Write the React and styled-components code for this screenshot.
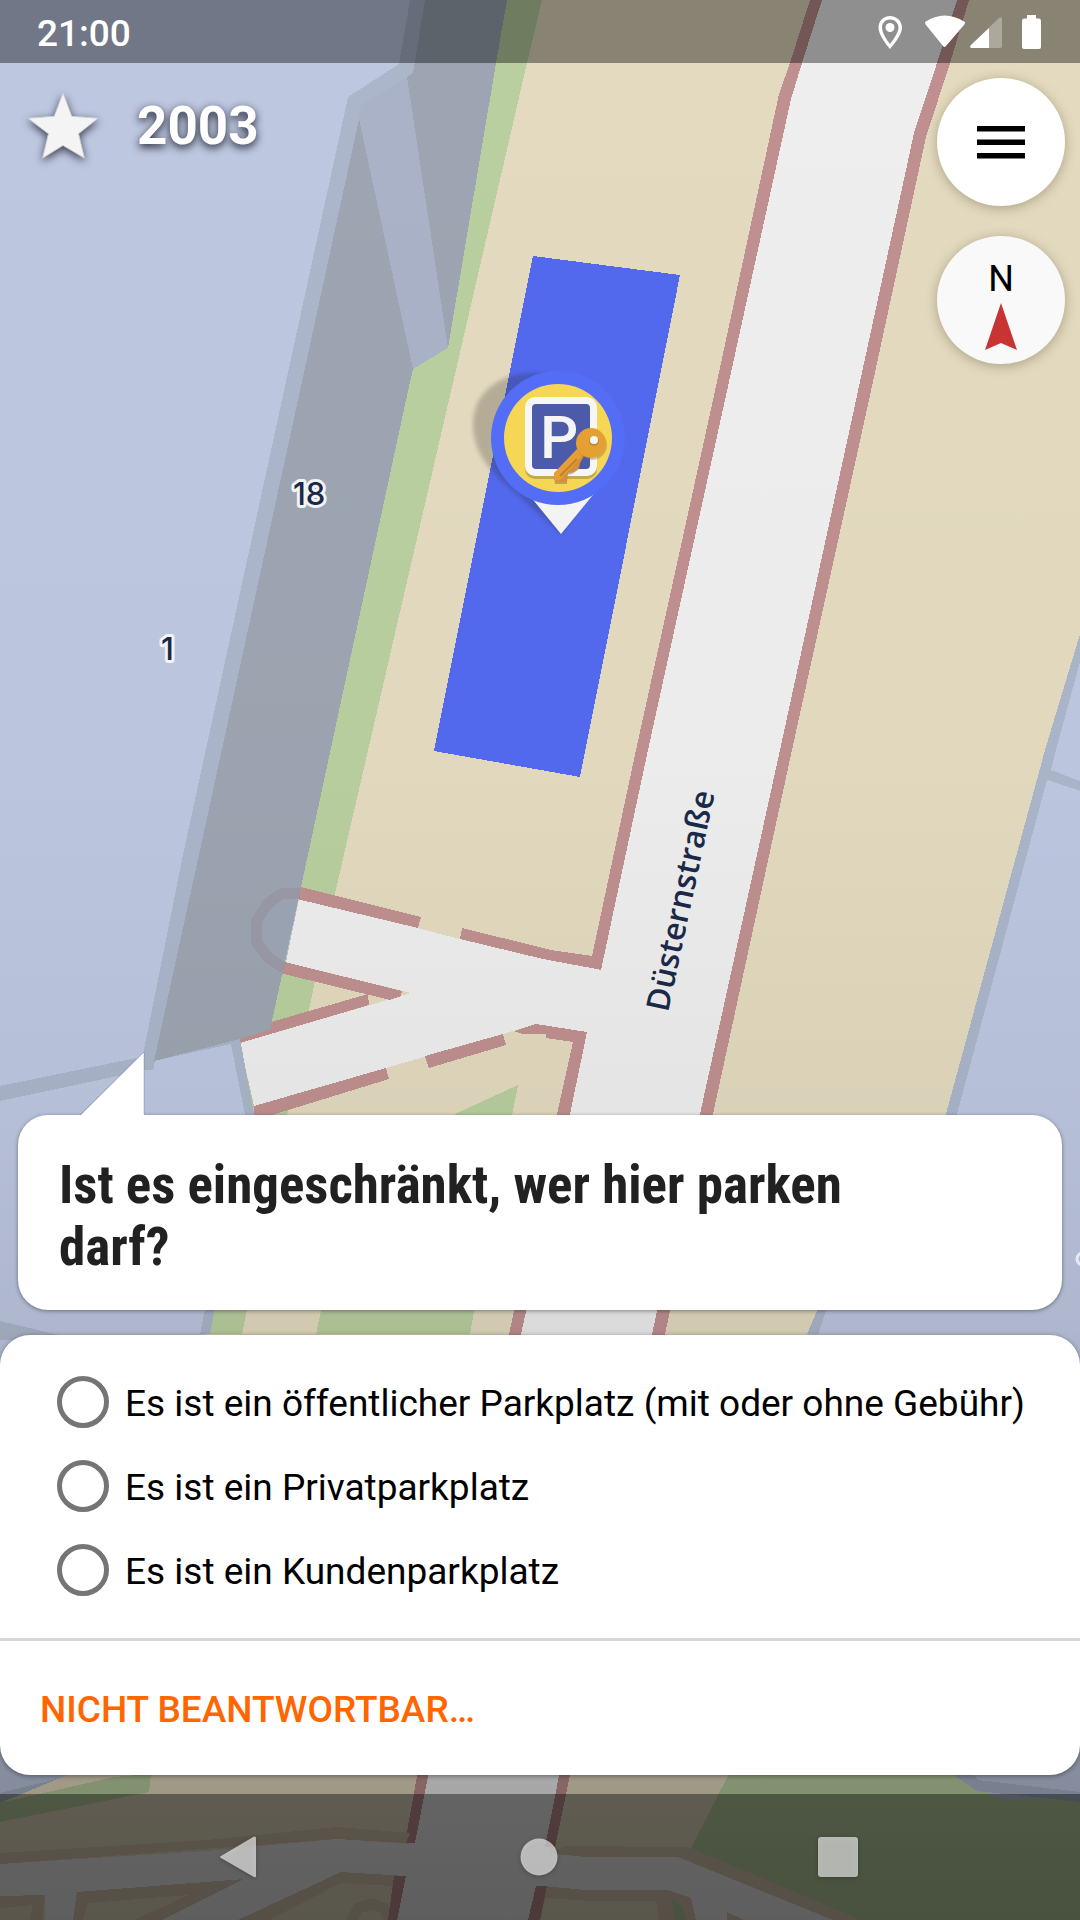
import React, { useState } from "react";
import styled, { createGlobalStyle } from "styled-components";

const GlobalStyle = createGlobalStyle`
  * { box-sizing: border-box; }
  html, body { margin: 0; padding: 0; }
  body { font-family: Roboto, "Liberation Sans", sans-serif; color: #000; }
`;

const Screen = styled.main`
  position: relative;
  display: flex;
  flex-direction: column;
  min-height: 100vh;
  overflow: hidden;
  background: #e3dabf;
`;

const MapCanvas = styled.svg`
  position: absolute;
  inset: 0;
  width: 100%;
  height: 100%;
`;

const MapLabel = styled.text`
  font-family: ${(p) => (p.$street ? '"Open Sans"' : "Inter")}, "Noto Sans", sans-serif;
  font-size: ${(p) => (p.$street ? 32 : 31)}px;
  font-weight: ${(p) => (p.$street ? 600 : 500)};
  fill: #1a2947;
  stroke: ${(p) => (p.$street ? "#ebebeb" : "#f2f3f5")};
  stroke-width: ${(p) => (p.$street ? 2 : 6)}px;
  stroke-linejoin: round;
  paint-order: stroke;
`;

const SignLetter = styled.text`
  font-family: Roboto, sans-serif;
  font-size: 60px;
  font-weight: 500;
  fill: #f5f5f5;
`;

const StatusBar = styled.header`
  position: relative;
  display: flex;
  align-items: center;
  justify-content: space-between;
  height: 63px;
  padding: 0 37px;
  background: rgba(0, 0, 0, 0.4);
  color: #fff;
`;

const Clock = styled.time`
  padding-top: 4px;
  font-size: 37px;
  font-weight: 500;
  line-height: 42px;
`;

const StatusIcons = styled.svg`
  width: 168px;
  height: 40px;
`;

const MapControls = styled.div`
  position: relative;
  display: flex;
  align-items: flex-start;
  justify-content: space-between;
  padding: 15px 15px 0 28px;
`;

const Score = styled.div`
  display: flex;
  align-items: center;
  gap: 39px;
  height: 96px;
`;

const StarIcon = styled.svg`
  width: 70px;
  height: 70px;
  overflow: visible;
  filter: drop-shadow(0 3px 4px rgba(20, 22, 35, 0.75));
`;

const ScoreValue = styled.span`
  font-size: 53px;
  font-weight: 700;
  line-height: 62px;
  color: #fff;
  text-shadow: 0 3px 9px rgba(20, 22, 35, 0.95);
`;

const ButtonColumn = styled.div`
  display: flex;
  flex-direction: column;
  gap: 30px;
`;

const RoundButton = styled.button`
  display: flex;
  flex-direction: column;
  align-items: center;
  justify-content: center;
  width: 128px;
  height: 128px;
  padding: ${(p) => (p.$compass ? "8px 0 0" : 0)};
  border: 0;
  border-radius: 50%;
  background: ${(p) => (p.$compass ? "#f9f9f9" : "#ffffff")};
  color: #000;
  font-family: inherit;
  font-size: 36px;
  line-height: 42px;
  box-shadow: 0 2px 12px rgba(70, 60, 30, 0.35);
`;

const MenuIcon = styled.svg`
  width: 48px;
  height: 34px;
`;

const NeedleIcon = styled.svg`
  width: 34px;
  height: 48px;
  margin-top: 3px;
`;

const Question = styled.section`
  position: relative;
  margin: auto 18px 25px;
  padding: 39px 41px 32px;
  border-radius: 30px;
  background: #fff;
  box-shadow: 0 1px 4px rgba(0, 0, 0, 0.4);
`;

const SpeechTail = styled.svg`
  position: absolute;
  left: 62px;
  bottom: 100%;
  width: 64px;
  height: 63px;
  overflow: visible;
`;

const QuestionTitle = styled.h1`
  max-width: 820px;
  margin: 0;
  color: #212121;
  font-family: "Roboto Condensed", "Liberation Sans Narrow", Roboto, sans-serif;
  font-size: 53px;
  font-weight: 700;
  line-height: 62px;
`;

const AnswerSheet = styled.form`
  position: relative;
  margin-bottom: 19px;
  border-radius: 30px;
  background: #fff;
  box-shadow: 0 1px 5px rgba(0, 0, 0, 0.4);
`;

const Options = styled.div`
  display: flex;
  flex-direction: column;
  padding: 25px 48px 26px 57px;
`;

const Option = styled.label`
  display: flex;
  align-items: center;
  gap: 16px;
  min-height: 84px;
  font-size: 37px;
  line-height: 42px;
`;

const OptionText = styled.span`
  padding-top: 3px;
`;

const Radio = styled.input`
  flex: none;
  appearance: none;
  width: 52px;
  height: 52px;
  margin: 0;
  border: 5px solid #757575;
  border-radius: 50%;
  background: #fff;

  &:checked {
    border-color: #ff6600;
    background: radial-gradient(circle, #ff6600 40%, #fff 44%);
  }
`;

const SheetFooter = styled.div`
  display: flex;
  border-top: 3px solid #d6d6d6;
`;

const TextButton = styled.button`
  padding: 48px 40px 44px;
  border: 0;
  background: none;
  color: #ff6600;
  font-family: inherit;
  font-size: 37px;
  font-weight: 500;
  line-height: 42px;
  text-transform: uppercase;
`;

const NavBar = styled.nav`
  position: relative;
  display: flex;
  justify-content: center;
  height: 126px;
  padding-right: 2px;
  background: rgba(0, 0, 0, 0.4);
`;

const NavButton = styled.button`
  display: flex;
  align-items: center;
  justify-content: center;
  flex: 0 1 299px;
  padding: 0;
  border: 0;
  background: none;
`;

const NavIcon = styled.svg`
  width: 44px;
  height: 44px;
  overflow: visible;
  fill: rgba(255, 255, 255, 0.62);
  filter: drop-shadow(0 1px 2px rgba(0, 0, 0, 0.4));
`;

const C = {
  ground: "#e3dabf",
  green: "#b9cf9f",
  building: "#bdc7e0",
  wall: "#abb6cb",
  side: "#9ca5b1",
  road: "#eeeeee",
  curb: "#c09090",
  path: "#d8c8b3",
};

function QuestPin() {
  return (
    <g>
      <path
        d="M473 424 C473 393 500 373 533 373 C569 373 595 400 595 435 C595 470 590 495 561 534 L503 482 C483 464 473 446 473 424Z"
        fill="#26221c"
        opacity="0.24"
        filter="url(#soft)"
      />
      <path d="M530 496 L561 534 L597 490Z" fill="#f3f3f3" />
      <circle cx="558" cy="438" r="67" fill="#536df6" />
      <circle cx="558" cy="438" r="54" fill="#f5d655" />
      <rect x="525" y="400" width="72" height="79" rx="10" fill="#c3ab47" />
      <rect x="525" y="397" width="72" height="79" rx="10" fill="#f6f6f6" />
      <rect x="532" y="404" width="58" height="65" rx="4" fill="#4b5aa9" />
      <SignLetter x="540" y="458">P</SignLetter>
      <path d="M554 476 l22 -24 l6 6 l-4 12 l-6 4 l-5 1 v9 h-12z" fill="#7a6a40" opacity="0.45" />
      <path d="M578 450 L584 456 L580 463 L579 468 L574 472 L568 473 L567 482 L556 482 Q553 478 555 474Z" fill="#d48f38" />
      <path d="M577 449 L583 455 L560 480 Q555 482 554 477 V473Z" fill="#e4a033" />
      <path d="M577 459 L560 476" stroke="#bf8030" strokeWidth="2" />
      <circle cx="592" cy="445" r="15" fill="#8a7a4a" opacity="0.4" />
      <circle cx="591" cy="443" r="15" fill="#e4a033" />
      <circle cx="594" cy="441" r="5" fill="#b98a3a" />
      <circle cx="594" cy="440" r="4" fill="#f6f6f6" />
    </g>
  );
}

function StreetMap() {
  return (
    <MapCanvas viewBox="0 0 1080 1920" preserveAspectRatio="xMidYMid slice" role="img" aria-label="Karte">
      <defs>
        <linearGradient id="dusk" x1="0" y1="0" x2="0" y2="1">
          <stop offset="0" stopOpacity="0" />
          <stop offset="0.4" stopOpacity="0.01" />
          <stop offset="0.58" stopOpacity="0.04" />
          <stop offset="0.69" stopOpacity="0.08" />
          <stop offset="0.92" stopOpacity="0.29" />
          <stop offset="1" stopOpacity="0.34" />
        </linearGradient>
        <filter id="soft" x="-20%" y="-20%" width="140%" height="140%">
          <feGaussianBlur stdDeviation="2" />
        </filter>
      </defs>
      <g shapeRendering="crispEdges">
        <rect width="1080" height="1920" fill={C.ground} />

        {/* verges */}
        <path fill={C.green} d="M500 0 H542 L527 63 L449 400 L345 850 L315 981 L287 1115 L242 1334 H205 L255 1040 L380 400Z" />
        <path fill={C.green} d="M518 1085 L455 1114 L370 1200 L321 1311 L316 1334 H470 L474 1311Z" />

        {/* side streets at the junction */}
        <path fill={C.road} d="M298 899 L417 928 L460 939 L543 959 L600 969 H660 V1045 L587 1032 L536 1024 L503 1034 L386 1068 L254 1106 L240 1043 L370 1005 L411 993 L285 962Z" />
        <path fill={C.curb} d="M301 887 L421 917 L418 928 L297 899Z" />
        <path fill={C.curb} d="M462 928 L547 949 L551 950 L592 956 L602 970 L543 959 L460 939Z" />
        <path fill={C.curb} d="M285 962 L402 991 L401 996 L390 1000 L280 973Z" />
        <path fill={C.curb} d="M368 994 L369 1005 L240 1043 V1031 L271 1022Z" />
        <path fill={C.curb} d="M254 1106 L386 1068 L389 1079 L272 1115 H254Z" />
        <path fill={C.curb} d="M425 1056 L503 1034 L506 1045 L429 1068Z" />

        {/* main street */}
        <path fill={C.road} d="M816 0 L796 63 L785 97 L719 400 L642 750 L598 960 L580 1034 L563 1114 L515 1334 L422 1776 L409 1843 L399 1876 L392 1920 H534 L550 1850 L564 1776 L658 1334 L706 1114 L786 750 L862 400 L920 135 L943 63 L963 0Z" />
        <path fill={C.curb} d="M810 0 H822 L802 63 L791 99 L725 400 L648 750 L601 970 L590 967 L592 956 L636 750 L713 400 L779 94 L790 63Z" />
        <path fill={C.curb} d="M957 0 H969 L950 63 L926 137 L869 400 L792 750 L713 1114 L665 1334 L570 1776 L555 1847 H545 L559 1776 L652 1334 L700 1114 L780 750 L856 400 L914 133 L937 63Z" />
        <path fill={C.curb} d="M514 1031 L536 1024 L587 1032 L570 1114 L521 1334 L428 1776 L415 1843 H405 L417 1776 L509 1334 L557 1114 L573 1042 L546 1038 V1034 H522Z" />

        {/* large building on the left */}
        <path fill={C.building} d="M0 0 H416 L399 64 L354 100 L154 1061 L240 1040 L254 1114 L204 1340 H0Z" />
        <path fill={C.wall} d="M410 0 H425 L413 73 L407 77 L361 106 L359 119 L298 400 L200 850 L153 1070 H140 L184 850 L282 400 L348 97 L399 64Z" />
        <path fill={C.side} d="M425 0 H507 L496 63 L448 348 L413 369 L406 400 L301 887 L270 1030 L240 1039 L154 1061 L200 850 L298 400 L359 119 L407 77 L413 73Z" />
        <path fill="#aab2c8" d="M361 105 L407 77 L448 348 L413 369 L359 119Z" />
        <path fill="none" stroke="#988fa0" strokeWidth="11" strokeOpacity="0.5" d="M300 893 L283 893 L268 903 L256 922 V941 L268 958 L284 968" />
        <path fill="#9ea6b8" opacity="0.6" d="M299 899 L283 899 L272 908 L262 924 V938 L272 951 L286 962Z" />
        <path fill={C.wall} d="M0 1086 L141 1057 L146 1070 L0 1101Z" />
        <path fill={C.wall} d="M154 1061 L240 1039 L254 1114 L210 1334 H200 L245 1114 L231 1044Z" />
        <path fill={C.wall} d="M0 1321 L80 1340 H0Z" />

        {/* building on the right */}
        <path fill={C.building} d="M1080 640 L1045 750 L946 1114 L807 1336 L952 1776 L977 1791 L1080 1802Z" />
        <path fill={C.wall} d="M1080 634 L1045 750 L946 1114 L817 1311 L807 1334 H818 L826 1311 L957 1114 L1047 780 L1080 791 V781 L1051 770 L1056 750 L1080 662Z" />

        {/* lower edge of the map */}
        <path fill={C.building} d="M0 1340 H114 V1777 L0 1803Z" />
        <path fill={C.wall} d="M0 1793 L69 1776 H114 L0 1803Z" />
        <path fill={C.ground} d="M0 1803 L151 1740 H418 L405 1833 L0 1860Z" />
        <path fill={C.green} d="M0 1803 L114 1777 L151 1774 L149 1792 L0 1822Z" />
        <path fill={C.ground} d="M571 1770 H735 L691 1848 H555Z" />
        <path fill={C.green} d="M731 1770 H950 L1080 1802 V1920 H861 L691 1848Z" />
        <path fill={C.building} d="M950 1770 H1080 V1800 H1000Z" />
        <path fill={C.wall} d="M952 1774 H972 L978 1780 L1080 1792 V1802 L977 1791Z" />
        <path fill={C.path} d="M0 1853 L207 1840 L337 1827 L410 1833 L406 1843 L337 1839 L0 1864Z" />
        <path fill={C.road} d="M0 1864 L207 1851 L337 1839 L412 1844 L400 1877 L341 1872 L238 1920 H45 V1895 L0 1896Z" />
        <path fill={C.path} d="M0 1896 L45 1895 L42 1920 H0Z" />
        <path fill={C.ground} d="M0 1908 L33 1905 L30 1920 H0Z" />
        <path fill={C.path} d="M77 1892 L244 1879 L162 1920 H73Z" />
        <path fill={C.ground} d="M88 1903 L189 1895 L134 1920 H83Z" />
        <path fill={C.path} d="M341 1872 L406 1876 L394 1886 L389 1920 H238Z" />
        <path fill={C.ground} d="M341 1883 L394 1886 L389 1920 H269Z" />
        <path fill="none" stroke={C.path} strokeWidth="11" d="M351 1922 L358 1908 L372 1904 L384 1908 L391 1922" />
        <path fill={C.curb} d="M394 1876 H406 L397 1920 H388Z" />
        <path fill={C.path} d="M565 1846 L682 1847 L691 1848 L861 1920 H833 L678 1857 H585 L550 1853Z" />
        <path fill={C.road} d="M545 1853 L585 1857 H678 L833 1920 H744 L727 1912 V1920 H696 L691 1898 L668 1890 H585 L544 1886 H530Z" />
        <path fill={C.path} d="M544 1886 L585 1890 H668 L691 1898 L696 1920 H540Z" />
        <path fill={C.ground} d="M546 1898 L592 1901 H656 L659 1920 H538Z" />
        <path fill={C.green} d="M672 1900 L682 1906 L686 1920 H674Z" />
        <path fill={C.curb} d="M536 1886 H547 L540 1920 H528Z" />
        <path fill={C.path} d="M727 1912 L744 1920 H727Z" />
        <rect width="1080" height="1920" fill="url(#dusk)" />

        <path fill="#5269ed" d="M533 256 L680 275 L580 777 L434 751Z" />
      </g>
      <circle cx="1083" cy="1259" r="6" fill="none" stroke="#e8eaf0" strokeWidth="3" />
      <MapLabel x="293" y="505">18</MapLabel>
      <MapLabel x="161" y="660">1</MapLabel>
      <MapLabel $street transform="translate(668 1013) rotate(-78)">Düsternstraße</MapLabel>
      <QuestPin />
    </MapCanvas>
  );
}

const answers = [
  ["yes", "Es ist ein öffentlicher Parkplatz (mit oder ohne Gebühr)"],
  ["private", "Es ist ein Privatparkplatz"],
  ["customers", "Es ist ein Kundenparkplatz"],
];

export default function App() {
  const [answer, setAnswer] = useState(null);
  return (
    <>
      <GlobalStyle />
      <Screen>
        <StreetMap />
        <StatusBar>
          <Clock>21:00</Clock>
          <StatusIcons viewBox="875 11 168 40" fill="#fff" aria-hidden="true">
            <path
              fillRule="evenodd"
              d="M890 15 C883.500 15 878.500 20 878.500 26.500 C878.500 35 890 48 890 48 C890 48 902 35 902 26.500 C902 20 896.500 15 890 15Z M890 18.500 C894.500 18.500 898.500 22 898.500 26.500 C898.500 31 894 38 890 43 C886 38 882 31 882 26.500 C882 22 885.500 18.500 890 18.500Z"
            />
            <circle cx="890" cy="26.500" r="4.500" />
            <path d="M925 21 Q944.500 8 965 21 Q965 23 964 24 L946 45 Q944.500 47 943 45 L926 24 Q925 23 925 21Z" />
            <path d="M971 44 L999 17 Q1002 15 1002 18 V45 Q1002 47 1000 47 H972 Q969 47 971 44Z" opacity="0.3" />
            <path d="M971 44 L989 27 V47 H972 Q969 47 971 44Z" />
            <path d="M1027 14 H1036 V17.500 H1039 Q1041 17.500 1041 20 V46 Q1041 48 1039 48 H1024 Q1022 48 1022 46 V20 Q1022 17.500 1024 17.500 H1027Z" />
          </StatusIcons>
        </StatusBar>

        <MapControls>
          <Score>
            <StarIcon viewBox="27 88 72 72" aria-hidden="true">
              <path
                d="M63 90 L72 114 L99 116 L79 132 L85 157 L63 144 L42 157 L48 132 L27 116 L54 114Z"
                fill="#f4f4f4"
                stroke="#cfcfcf"
                strokeWidth="1"
              />
            </StarIcon>
            <ScoreValue>2003</ScoreValue>
          </Score>
          <ButtonColumn>
            <RoundButton type="button" aria-label="Menü">
              <MenuIcon viewBox="0 0 48 34" aria-hidden="true">
                <path d="M0 1H48V6.500H0Z M0 14.500H48V20H0Z M0 28H48V33.500H0Z" />
              </MenuIcon>
            </RoundButton>
            <RoundButton type="button" $compass>
              N
              <NeedleIcon viewBox="0 0 34 48" aria-hidden="true">
                <path d="M17 0 L33 47 L17 40 L1 47Z" fill="#c83434" />
              </NeedleIcon>
            </RoundButton>
          </ButtonColumn>
        </MapControls>

        <Question>
          <SpeechTail viewBox="0 0 64 63" aria-hidden="true">
            <path d="M64 0 V64 H0Z" fill="#fff" />
            <path d="M0 63 L64 0 V62" fill="none" stroke="#000" strokeOpacity="0.18" />
          </SpeechTail>
          <QuestionTitle>Ist es eingeschränkt, wer hier parken darf?</QuestionTitle>
        </Question>

        <AnswerSheet>
          <Options role="radiogroup">
            {answers.map(([value, label]) => (
              <Option key={value}>
                <Radio
                  type="radio"
                  name="access"
                  value={value}
                  checked={answer === value}
                  onChange={() => setAnswer(value)}
                />
                <OptionText>{label}</OptionText>
              </Option>
            ))}
          </Options>
          <SheetFooter>
            <TextButton type="button">Nicht beantwortbar…</TextButton>
          </SheetFooter>
        </AnswerSheet>

        <NavBar>
          <NavButton type="button" aria-label="Zurück">
            <NavIcon viewBox="0 0 44 44">
              <path d="M3 21 L36 1.500 Q38 1 38 3 V41 Q38 43 36 42 L3 23 Q1 22 3 21Z" />
            </NavIcon>
          </NavButton>
          <NavButton type="button" aria-label="Startseite">
            <NavIcon viewBox="0 0 44 44">
              <circle cx="22" cy="22" r="18.500" />
            </NavIcon>
          </NavButton>
          <NavButton type="button" aria-label="Übersicht">
            <NavIcon viewBox="0 0 44 44">
              <rect x="2" y="2" width="40" height="40" rx="3" />
            </NavIcon>
          </NavButton>
        </NavBar>
      </Screen>
    </>
  );
}
